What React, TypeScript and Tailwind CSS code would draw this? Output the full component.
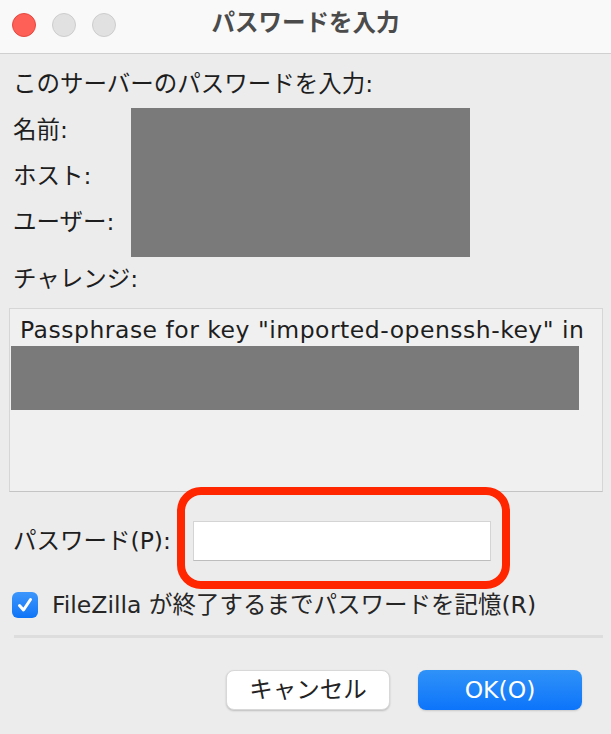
export default function App() {
  return (
    <div className="w-[611px] h-[734px] overflow-hidden bg-[#ececec] text-[#1e1e1e] font-['DejaVu_Sans','Noto_Sans_CJK_JP',sans-serif]">
      {/* title bar */}
      <div className="h-[54px] border-b border-[#d0d0d0] bg-[#f9f9f9] grid grid-cols-[1fr_auto_1fr] items-start">
        <div className="flex gap-[16px] pl-[12px] pt-[13px]">
          <span className="w-[24px] h-[24px] rounded-full bg-[#fe5f57] border border-[#e5483f]" />
          <span className="w-[24px] h-[24px] rounded-full bg-[#e1e1e1] border border-[#cdcdcd]" />
          <span className="w-[24px] h-[24px] rounded-full bg-[#e1e1e1] border border-[#cdcdcd]" />
        </div>
        <div className="pt-[8px] leading-[30px] text-[23.5px] font-bold text-[#4b4b4b]">パスワードを入力</div>
        <div />
      </div>

      <div className="px-[13px] text-[23.5px] leading-[28px]">
        <p className="mt-[16px]">このサーバーのパスワードを入力:</p>

        <div className="flex mt-[10px]">
          <div className="w-[118px] flex flex-col gap-[18px] pt-[8px]">
            <p>名前:</p>
            <p>ホスト:</p>
            <p>ユーザー:</p>
          </div>
          <div className="w-[339px] h-[149px] bg-[#7a7a7a]" />
        </div>

        <p className="mt-[8px]">チャレンジ:</p>

        {/* challenge text */}
        <div className="-ml-[4px] mt-[15px] w-[594px] h-[184px] bg-[#f0f0f0] border border-[#d6d6d6] border-b-[#c4c4c4] pt-[7px]">
          <p className="pl-[10px] whitespace-nowrap tracking-[0.5px]">Passphrase for key "imported-openssh-key" in</p>
          <div className="ml-[1px] mt-[2px] w-[568px] h-[64px] bg-[#7a7a7a]" />
        </div>

        {/* password field */}
        <div className="relative flex items-center mt-[29px] h-[40px]">
          <p className="w-[180px]">パスワード(P):</p>
          <div className="w-[298px] h-[40px] bg-white border border-[#d4d4d4] border-b-[#bdbdbd]" />
          <div className="absolute left-[164px] -top-[34px] w-[333px] h-[102px] rounded-[24px] border-[8px] border-[#ff2600]" />
        </div>

        {/* remember checkbox */}
        <div className="flex items-center gap-[14px] mt-[31px] h-[26px]">
          <span className="-ml-[1px] w-[26px] h-[26px] rounded-[6px] bg-gradient-to-b from-[#3c96fb] to-[#0b74f7] flex items-center justify-center">
            <svg width="18" height="18" viewBox="0 0 18 18" fill="none">
              <path d="M3.5 9.5 L7.5 14 L14.5 3.5" stroke="white" strokeWidth="3" strokeLinecap="round" strokeLinejoin="round" />
            </svg>
          </span>
          <p className="text-[#262626] whitespace-nowrap">FileZilla が終了するまでパスワードを記憶(R)</p>
        </div>

        <div className="ml-[1px] mt-[17px] w-[589px] h-[3px] bg-[#dddddd]" />

        {/* buttons */}
        <div className="flex justify-end gap-[28px] mt-[32px] mr-[16px]">
          <button className="w-[164px] h-[40px] rounded-[8px] bg-white border border-[#d8d8d8] shadow-[0_1px_2px_rgba(0,0,0,0.2)] text-[#222]">
            キャンセル
          </button>
          <button className="w-[164px] h-[40px] rounded-[8px] bg-gradient-to-b from-[#2f92f8] to-[#0b74fa] shadow-[0_1px_2px_rgba(0,0,0,0.15)] text-white">
            OK(O)
          </button>
        </div>
      </div>
    </div>
  );
}
